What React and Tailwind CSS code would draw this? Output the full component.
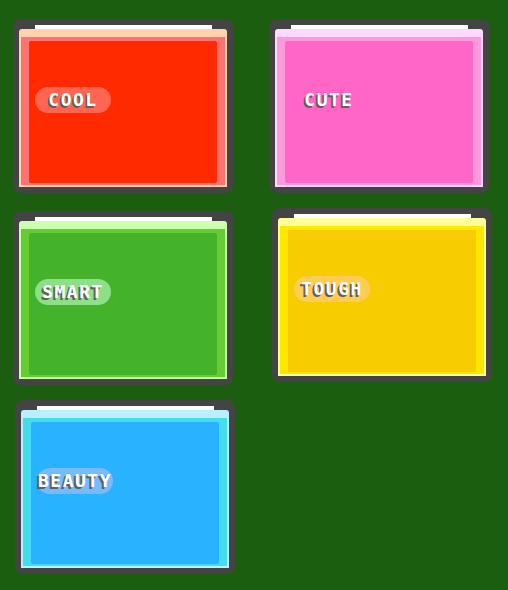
const CARDS = [
	{
		label: "COOL",
		light: "bg-[#ffd3b0]",
		frame: "bg-[#ff7272]",
		fill: "bg-[#ff2a00]",
		pill: "bg-[#ff6652]",
		shift: "",
	},
	{
		label: "CUTE",
		light: "bg-[#ffd8ff]",
		frame: "bg-[#ff99dd]",
		fill: "bg-[#ff66c6]",
		pill: "bg-[#ff66c6]",
		shift: "",
	},
	{
		label: "SMART",
		light: "bg-[#ccffb0]",
		frame: "bg-[#66cc33]",
		fill: "bg-[#44b22a]",
		pill: "bg-[#8ddf88]",
		shift: "",
	},
	{
		label: "TOUGH",
		light: "bg-[#ffff99]",
		frame: "bg-[#ffe800]",
		fill: "bg-[#f7cc00]",
		pill: "bg-[#ffcc55]",
		shift: "ml-[3px] mt-[-3px]",
	},
	{
		label: "BEAUTY",
		light: "bg-[#bbeeff]",
		frame: "bg-[#44ddee]",
		fill: "bg-[#29b2ff]",
		pill: "bg-[#77bbff]",
		shift: "ml-[2px] mt-[-3px]",
	},
];

function Card({ card }) {
	return (
		<div
			className={`w-[220px] h-[174px] bg-[#444444] p-[6px] rounded-[8px] flex flex-col ${card.shift}`}
		>
			{/* highlight on the lid */}
			<div className="h-[4px] pl-[16px] pr-[15px]">
				<div className="h-full bg-white" />
			</div>
			<div
				className={`flex-1 flex flex-col rounded-t-[3px] ${card.light}`}
			>
				<div className="h-[8px]" />
				<div
					className={`flex-1 mx-[2px] mb-[2px] pt-[4px] px-[8px] pb-[2px] flex ${card.frame}`}
				>
					<div
						className={`flex-1 rounded-[2px] pt-[46px] pl-[6px] ${card.fill}`}
					>
						<div
							className={`w-[76px] h-[26px] rounded-full flex items-center justify-center text-white font-bold text-[18px] leading-none tracking-[1.5px] font-['DejaVu_Sans_Mono',monospace] [text-shadow:-2px_2px_0_#606060] ${card.pill}`}
						>
							{card.label}
						</div>
					</div>
				</div>
			</div>
		</div>
	);
}

export default function App() {
	return (
		<div className="w-[508px] h-[590px] bg-[#1c5e0f] pt-[19px] pl-[13px]">
			<div className="grid grid-cols-[220px_220px] gap-x-[36px] gap-y-[18px] items-start">
				{CARDS.map((card) => (
					<Card key={card.label} card={card} />
				))}
			</div>
		</div>
	);
}
